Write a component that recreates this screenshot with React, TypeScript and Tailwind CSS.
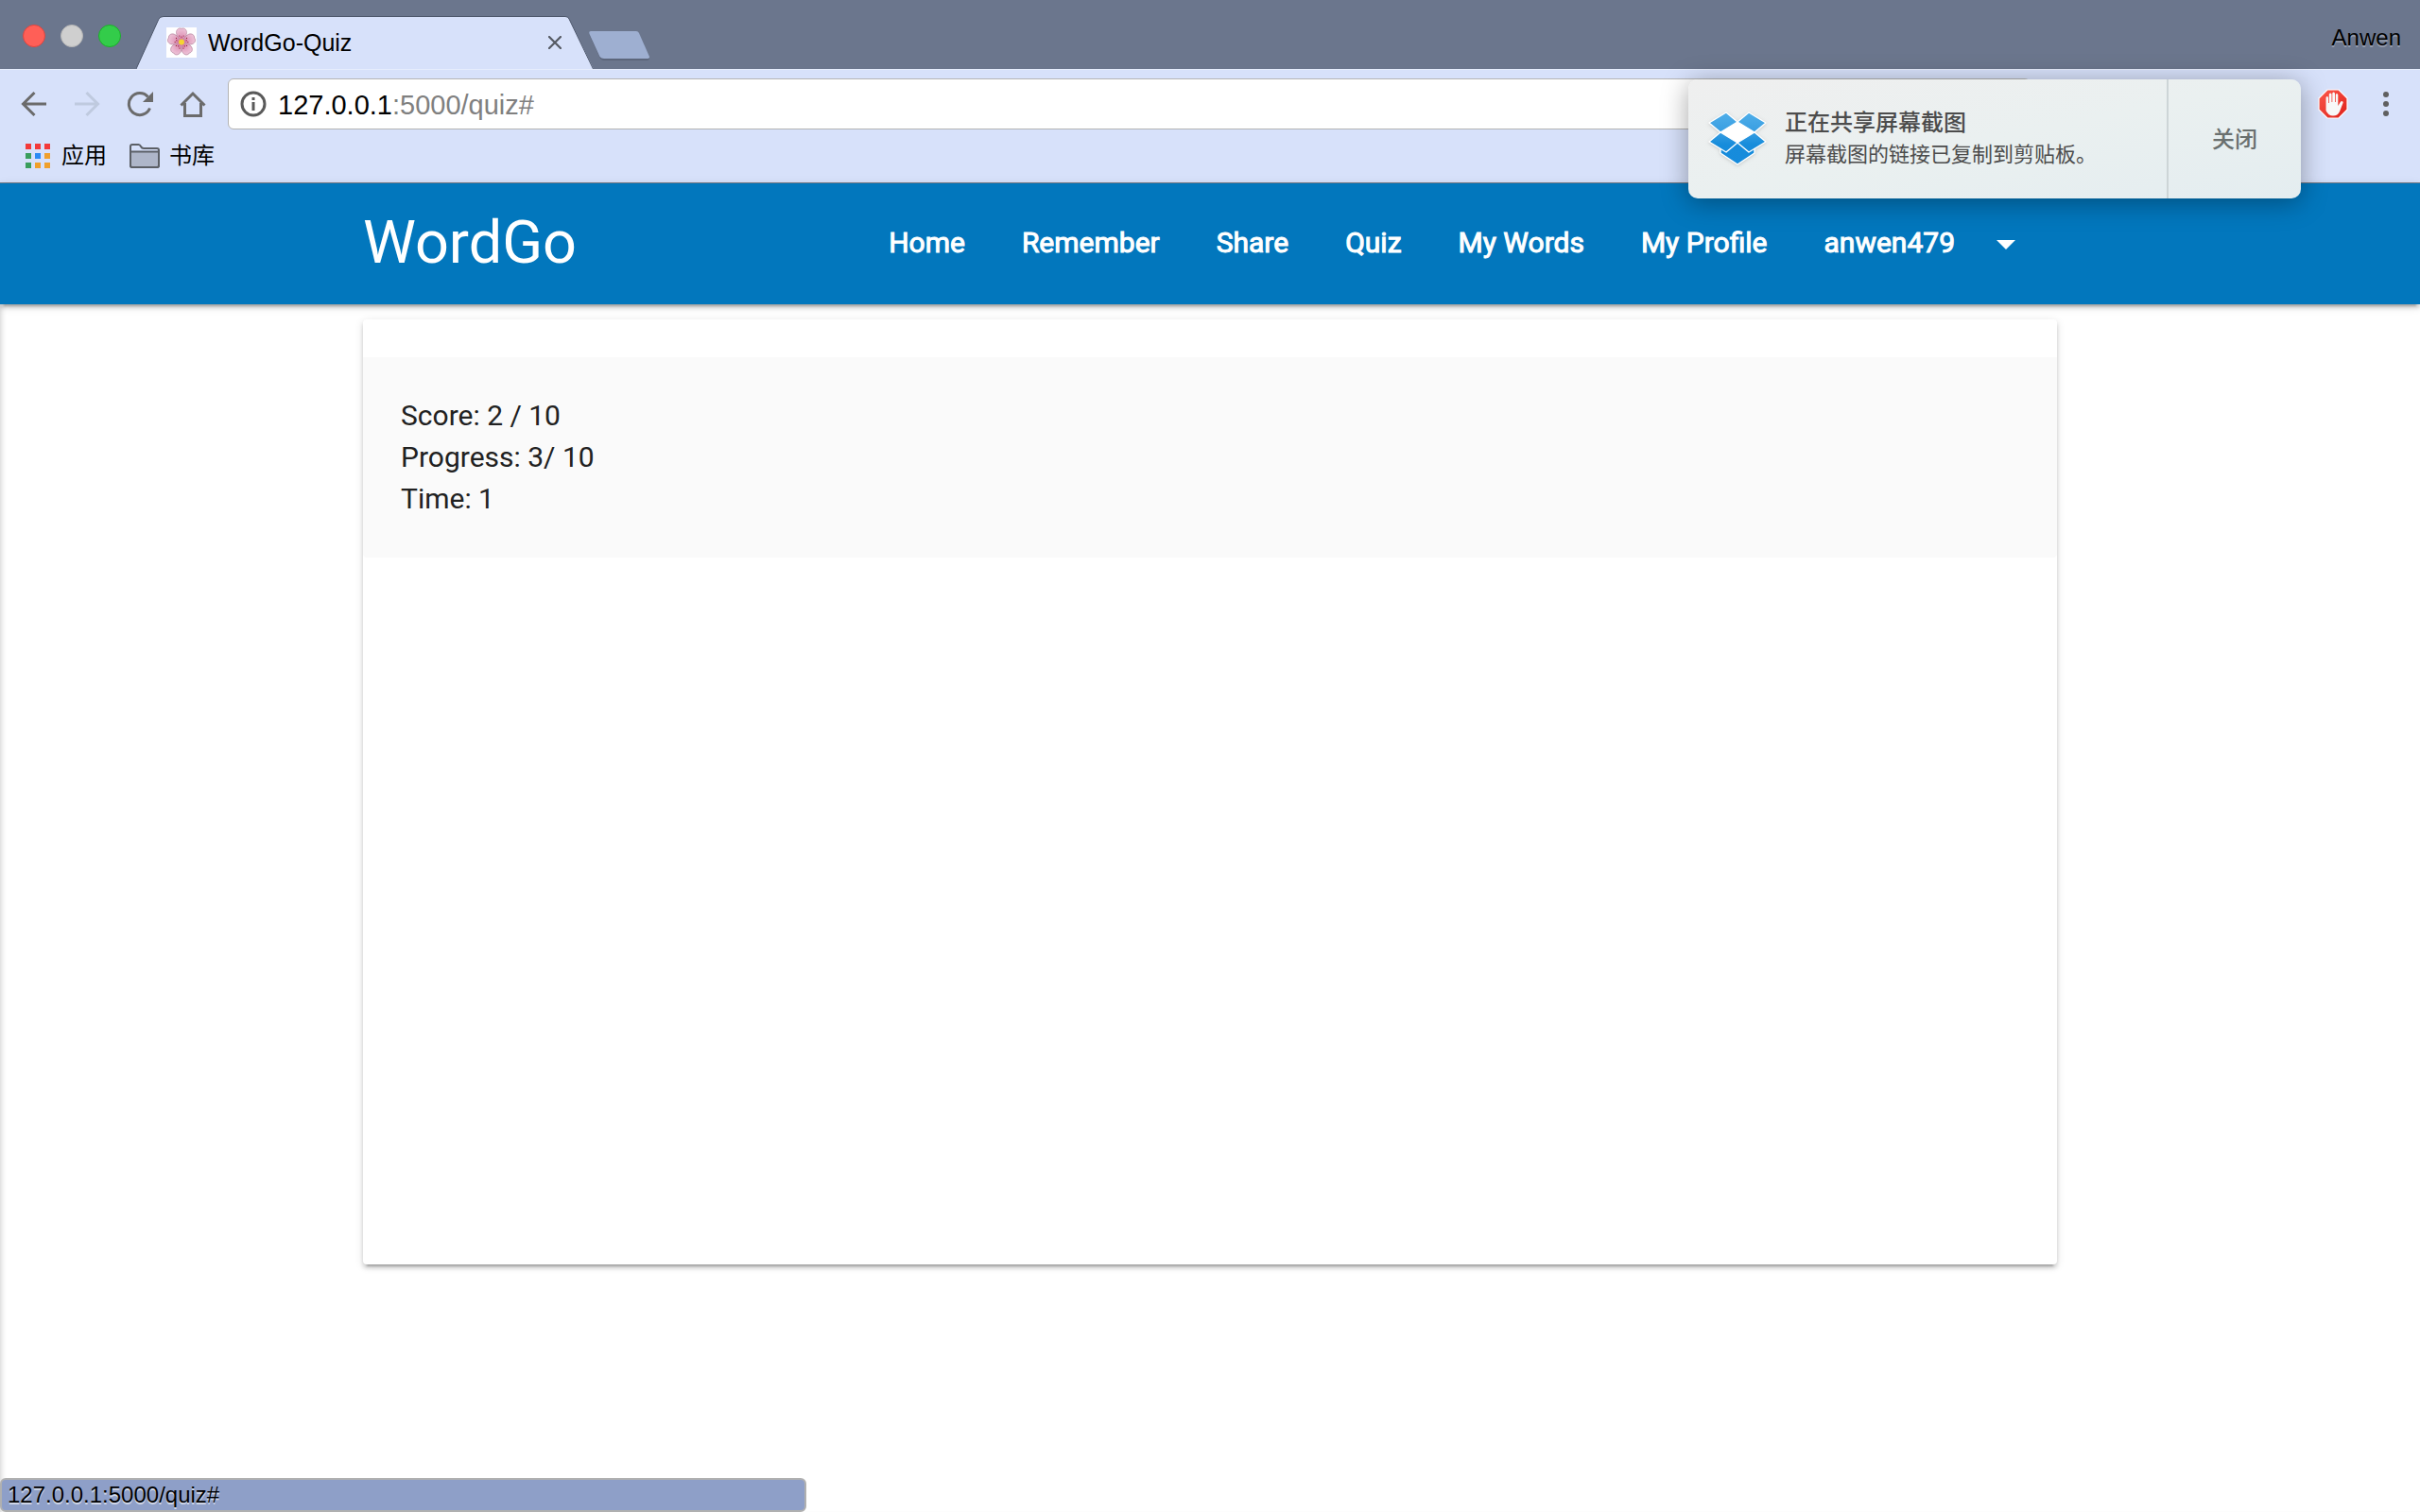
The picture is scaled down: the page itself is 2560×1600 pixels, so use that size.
const navLinks = ['Home', 'Remember', 'Share', 'Quiz', 'My Words', 'My Profile']

const appDots = ['#f33a3a', '#f33a3a', '#f33a3a', '#3a9e5c', '#2b8bf5', '#f0a02b', '#3a9e5c', '#f0a02b', '#f0a02b']

function Flower() {
  return (
    <svg viewBox="0 0 32 32" className="h-8 w-8 bg-white">
      <defs>
        <radialGradient id="petal" cx="50%" cy="80%" r="80%">
          <stop offset="0%" stopColor="#d987ad" />
          <stop offset="100%" stopColor="#eec3d8" />
        </radialGradient>
      </defs>
      {[0, 72, 144, 216, 288].map((deg) => (
        <g key={deg} transform={`rotate(${deg} 16 15.500)`}>
          <path
            d="M16 15.500C14.500 12.500 10.500 10 10.500 5.500 10.500 2 13.500 0 16 1.300 18.500 0 21.500 2 21.500 5.500 21.500 10 17.500 12.500 16 15.500Z"
            fill="url(#petal)"
            stroke="#b5839c"
            strokeWidth=".7"
          />
          <path d="M16 14V10M16 14l-2-4M16 14l2-4" stroke="#c9608f" strokeWidth=".4" />
          <circle cx="16" cy="10" r=".6" fill="#8c1228" />
          <circle cx="13.800" cy="9" r=".6" fill="#8c1228" />
          <circle cx="18.200" cy="9" r=".6" fill="#8c1228" />
        </g>
      ))}
      <circle cx="16" cy="15.500" r="3" fill="#f5d431" />
    </svg>
  )
}

function TabStrip() {
  return (
    <div className="flex h-[73px] items-end bg-[#6b768d]">
      <div className="flex gap-4 self-center pl-6 pt-[3px]">
        <button aria-label="Close window" className="h-6 w-6 rounded-full border border-[#e0443e] bg-[#ff5f57]" />
        <button aria-label="Minimize window" className="h-6 w-6 rounded-full border border-[#b5b5b5] bg-[#cfcfcf]" />
        <button aria-label="Zoom window" className="h-6 w-6 rounded-full border border-[#1dad2b] bg-[#33cc4a]" />
      </div>
      <div className="relative ml-4 flex h-14 w-[484px] items-center pl-8 pr-[34px]">
        <svg viewBox="0 0 484 56" className="absolute inset-0 h-full w-full">
          <path d="M0 56L24 3Q25.500 .5 29 .5H454Q457 .5 458 3L484 56Z" fill="#d7e1fa" />
          <path d="M0 56L24 3Q25.500 .5 29 .5H454Q457 .5 458 3L483.500 56" fill="none" stroke="#4d576b" />
        </svg>
        <div className="relative flex w-full items-center">
          <Flower />
          <span className="ml-3 flex-1 text-[25px] leading-8 text-black">WordGo-Quiz</span>
          <button aria-label="Close tab">
            <svg viewBox="0 0 14 14" className="h-[14px] w-[14px]" stroke="#555a63" strokeWidth="2.200">
              <path d="M1 1L13 13M13 1L1 13" strokeLinecap="round" />
            </svg>
          </button>
        </div>
      </div>
      <button aria-label="New tab" className="mb-2 -ml-[6px]">
        <svg viewBox="0 0 66 34" className="h-[34px] w-[66px]">
          <path d="M3 3H51Q53 3 54 5L65 30Q65.500 33 62 33H17Q14 33 12.500 30L1.500 6Q.5 3 3 3Z" fill="#5c667b" />
          <path d="M3 2H51Q53 2 54 4L65 29Q65.500 31 62 31H17Q14 31 12.500 29L1.500 5Q.5 2 3 2Z" fill="#9eafd1" />
        </svg>
      </button>
      <button className="ml-auto self-center pr-5 pt-[6px] text-2xl text-black [text-shadow:0_2px_0_rgba(255,255,255,0.3)]">
        Anwen
      </button>
    </div>
  )
}

function Toolbar() {
  return (
    <div className="flex h-16 items-center border-t border-[#e6edfc] pl-[22px] pr-5 pt-2">
      <div className="flex gap-7">
        <button aria-label="Back">
          <svg viewBox="0 0 28 28" className="h-7 w-7" fill="none" stroke="#6b6b6b" strokeWidth="3">
            <path d="M27 14H3M14.500 2L2.500 14L14.500 26" />
          </svg>
        </button>
        <button aria-label="Forward">
          <svg viewBox="0 0 28 28" className="h-7 w-7" fill="none" stroke="#bfcadf" strokeWidth="3">
            <path d="M1 14H25M13.500 2L25.500 14L13.500 26" />
          </svg>
        </button>
        <button aria-label="Reload">
          <svg viewBox="0 0 28 28" className="h-7 w-7" fill="none" stroke="#6b6b6b" strokeWidth="3">
            <path d="M22.500 6.500A11.500 11.500 0 1 0 24.500 18.500" />
            <path d="M28 1V12H17Z" fill="#6b6b6b" stroke="none" />
          </svg>
        </button>
        <button aria-label="Home page">
          <svg viewBox="0 0 28 28" className="h-7 w-7" fill="none" stroke="#6b6b6b" strokeWidth="3">
            <path d="M1.500 15.500L14 3L26.500 15.500M5.500 13V26.500H22.500V13" />
          </svg>
        </button>
      </div>
      <div className="ml-[23px] flex h-[54px] flex-1 items-center rounded-md border border-[#b3b3b3] bg-white pl-3">
        <svg viewBox="0 0 28 28" className="h-7 w-7" fill="none" stroke="#5a5a5a">
          <circle cx="14" cy="14" r="12" strokeWidth="3" />
          <path d="M14 12V21M14 7V10" strokeWidth="3" />
        </svg>
        <div className="ml-3 pt-[2px] text-[29px] leading-9 text-[#808080]">
          <span className="text-black">127.0.0.1</span>:5000/quiz#
        </div>
      </div>
      <button aria-label="AdBlock" className="ml-[304px]">
        <svg viewBox="0 0 32 32" className="h-8 w-8">
          <defs>
            <linearGradient id="stop" x1="0" y1="0" x2="1" y2="1">
              <stop offset="0" stopColor="#ff5a4e" />
              <stop offset="1" stopColor="#dd1f18" />
            </linearGradient>
          </defs>
          <path d="M10 1H22L31 10V22L22 31H10L1 22V10Z" fill="url(#stop)" stroke="#fff" strokeWidth="1.200" />
          <path
            d="M8.500 18V9.500Q8.500 8 9.800 8T11 9.500V15H11.800V6Q11.800 4.500 13.200 4.500T14.500 6V14H15.300V5Q15.300 3.500 16.600 3.500T18 5V14H18.800V6.500Q18.800 5 20 5T21.300 6.500V18L23.800 14Q25 12.500 26.300 13.500Q27 14 26.500 15L23 24Q21 28.500 16 28.500T8.500 23Z"
            fill="#f8f8f8"
          />
        </svg>
      </button>
      <button aria-label="Menu" className="ml-6 flex w-8 flex-col items-center gap-1">
        <i className="h-[6px] w-[6px] rounded-full bg-[#5f5f5f]" />
        <i className="h-[6px] w-[6px] rounded-full bg-[#5f5f5f]" />
        <i className="h-[6px] w-[6px] rounded-full bg-[#5f5f5f]" />
      </button>
    </div>
  )
}

function Bookmarks() {
  return (
    <div className="flex h-[57px] items-center border-b border-[#747a86] pl-[27px] text-2xl text-black">
      <a href="#apps" className="flex items-center">
        <div className="grid grid-cols-3 gap-1">
          {appDots.map((color, i) => (
            <i key={i} className="h-[6px] w-[6px]" style={{ background: color }} />
          ))}
        </div>
        <span className="ml-3">应用</span>
      </a>
      <a href="#books" className="ml-6 flex items-center">
        <svg viewBox="0 0 32 26" className="h-[26px] w-8" stroke="#5b5f66" strokeWidth="2">
          <path d="M1 23V3Q1 1 3 1H9.500Q11 1 12 3T15 5H29Q31 5 31 7V23Q31 25 29 25H3Q1 25 1 23Z" fill="#d7e1fa" />
          <path d="M1 8.500H31V23Q31 25 29 25H3Q1 25 1 23Z" fill="#aeb6c9" />
        </svg>
        <span className="ml-[10px]">书库</span>
      </a>
    </div>
  )
}

function Dropbox() {
  return (
    <svg viewBox="0 0 64 60" className="h-[60px] w-16 drop-shadow">
      <defs>
        <linearGradient id="box" x1="0" y1="0" x2="0" y2="60" gradientUnits="userSpaceOnUse">
          <stop offset="0" stopColor="#52b0ea" />
          <stop offset=".35" stopColor="#3a9fe2" />
          <stop offset=".6" stopColor="#178cdb" />
          <stop offset="1" stopColor="#168bdc" />
        </linearGradient>
      </defs>
      <path d="M14 23L32 12L50 23L32 34Z" fill="#fff" />
      <g fill="url(#box)" stroke="#fff" strokeWidth="1.400" strokeLinejoin="round">
        <path d="M14 40L32 34L50 40V45L32 57L14 45Z" />
        <path d="M20 2L32 12L14 23L2 13Z" />
        <path d="M44 2L62 13L50 23L32 12Z" />
        <path d="M14 23L32 34L20 44L2 33Z" />
        <path d="M50 23L62 33L44 44L32 34Z" />
      </g>
    </svg>
  )
}

function Notification() {
  return (
    <div className="absolute right-[126px] top-[84px] z-20 flex h-[126px] w-[648px] rounded-[10px] bg-linear-to-br from-[#efefef] via-[#eaf0f0] to-[#e4edf0] shadow-[0_4px_28px_rgba(0,0,0,0.35)]">
      <div className="flex flex-1 items-center pl-5">
        <Dropbox />
        <div className="ml-[18px] pb-[2px] text-[#4c4c4c]">
          <p className="text-2xl leading-9 font-medium">正在共享屏幕截图</p>
          <p className="text-[22px] leading-8">屏幕截图的链接已复制到剪贴板。</p>
        </div>
      </div>
      <button className="w-[142px] border-l-2 border-[#cdd5d7] pt-[2px] text-2xl font-medium text-[#6a706f]">关闭</button>
    </div>
  )
}

function Navbar() {
  return (
    <nav className="relative z-10 h-32 bg-[#0277bd] text-white shadow-[0_4px_4px_rgba(0,0,0,0.14),0_2px_10px_rgba(0,0,0,0.12),0_6px_2px_-4px_rgba(0,0,0,0.2)]">
      <div className="mx-auto flex h-full w-[70%] items-center justify-between pb-[2px]">
        <a href="#home" className="text-[63px] leading-[124px]">
          WordGo
        </a>
        <ul className="flex items-center text-[30px] leading-[48px] [-webkit-text-stroke:1px_white]">
          {navLinks.map((name) => (
            <li key={name}>
              <a href="#quiz" className="block px-[30px]">
                {name}
              </a>
            </li>
          ))}
          <li>
            <a href="#user" className="flex items-center px-[30px]">
              anwen479
              <svg viewBox="0 0 48 48" className="ml-[30px] h-12 w-12" fill="#fff">
                <path d="M14 21l10 10 10-10z" />
              </svg>
            </a>
          </li>
        </ul>
      </div>
    </nav>
  )
}

export default function App() {
  return (
    <div className="relative flex min-h-screen flex-col bg-white font-['Liberation_Sans','Noto_Sans_CJK_SC',sans-serif]">
      <header className="bg-[#d7e1fa]">
        <TabStrip />
        <Toolbar />
        <Bookmarks />
      </header>
      <Notification />
      <div className="flex flex-1 flex-col font-[Roboto,sans-serif] shadow-[inset_6px_0_6px_-5px_rgba(0,0,0,0.2)]">
        <Navbar />
        <main className="mx-auto mt-4 min-h-[1000px] w-[70%] rounded bg-white pt-10 shadow-[0_4px_4px_rgba(0,0,0,0.14),0_2px_10px_rgba(0,0,0,0.12),0_6px_2px_-4px_rgba(0,0,0,0.2)]">
          <section className="rounded-b bg-[#fafafa] p-10 text-[30px] leading-[44px] text-[#212121]">
            <p>Score: 2 / 10</p>
            <p>Progress: 3/ 10</p>
            <p>Time: 1</p>
          </section>
        </main>
      </div>
      <div className="absolute bottom-0 left-0 h-9 w-1/3 rounded-md border-2 border-[#b0b0b0] bg-[#8e9fc8] pl-[6px] text-2xl leading-8 text-black [text-shadow:0_2px_0_rgba(255,255,255,0.6)]">
        127.0.0.1:5000/quiz#
      </div>
    </div>
  )
}
